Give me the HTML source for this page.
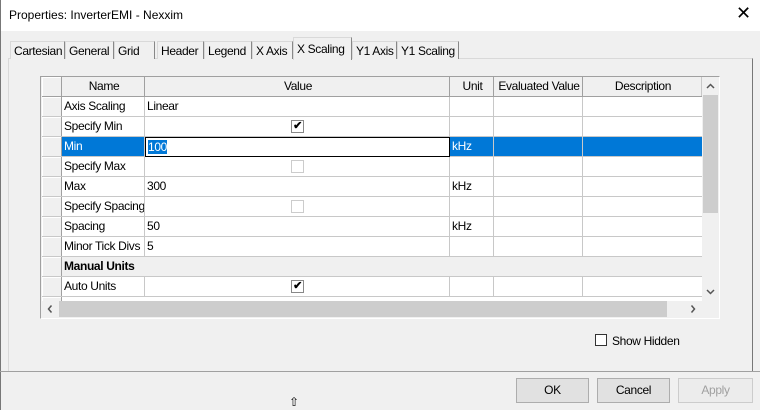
<!DOCTYPE html><html><head><style>
*{box-sizing:border-box;margin:0;padding:0}
body{width:760px;height:410px;background:#f0f0f0;font-family:"Liberation Sans",sans-serif;font-size:12px;color:#000;position:relative;overflow:hidden;letter-spacing:-0.35px}
.a{position:absolute}
.tab{position:absolute;top:41px;height:18px;border:1px solid #d9d9d9;border-bottom:none;background:#f0f0f0;padding:2px 0 0 3px;white-space:nowrap;border-right:1px solid #888;overflow:hidden}
.row{position:absolute;left:42px;width:660px;height:20px;background:#fff;border-bottom:1px solid #c8c8c8}
.c{position:absolute;top:0;height:19px;line-height:19px;padding-left:2px;border-right:1px solid #c8c8c8;white-space:nowrap;overflow:hidden}
.rh{left:0;width:20px;background:#f0f0f0;border-right:1px solid #a0a0a0;box-shadow:inset 1px 1px #fff}
.cb{position:absolute;width:13px;height:13px;border:1px solid #888;background:#fff;top:3px;left:146px;font-size:11px;line-height:11px;text-align:center;font-weight:bold}
.btn{position:absolute;top:378px;height:25px;border:1px solid #adadad;background:#e1e1e1;text-align:center;line-height:23px}
</style></head><body>
<div class="a" style="left:0;top:0;width:760px;height:31px;background:#fff"></div>
<div class="a" style="left:9px;top:8px;font-size:12px;letter-spacing:0">Properties: InverterEMI - Nexxim</div>
<div class="a" style="left:736px;top:3px;font-size:18px">✕</div>
<div class="a" style="left:0;top:0;width:1px;height:410px;background:#777"></div>
<div class="a" style="left:8px;top:58px;width:745px;height:314px;border:1px solid #d9d9d9;border-right:1px solid #777;border-bottom:none"></div>
<div class="a" style="left:0;top:371px;width:760px;height:1px;background:#a0a0a0"></div>
<div class="tab" style="left:10px;width:55px">Cartesian</div>
<div class="tab" style="left:65px;width:49px">General</div>
<div class="tab" style="left:114px;width:41px">Grid</div>
<div class="tab" style="left:157px;width:47px">Header</div>
<div class="tab" style="left:204px;width:48px">Legend</div>
<div class="tab" style="left:252px;width:41px">X Axis</div>
<div class="tab" style="left:293px;top:37px;height:23px;width:59px;background:#f0f0f0;z-index:2;padding-top:4px">X Scaling</div>
<div class="tab" style="left:352px;width:45px">Y1 Axis</div>
<div class="tab" style="left:397px;width:62px">Y1 Scaling</div>

<div class="a" style="left:40px;top:76px;width:680px;height:243px;border:1px solid #a0a0a0;border-right-color:#fff;border-bottom-color:#fff;background:#f0f0f0"></div>
<div class="row" style="top:77px;background:#f0f0f0;border-bottom:1px solid #a0a0a0">
<div class="c rh"></div>
<div class="c" style="left:20px;width:83px;text-align:center;border-right-color:#a0a0a0">Name</div>
<div class="c" style="left:103px;width:305px;text-align:center;border-right-color:#a0a0a0">Value</div>
<div class="c" style="left:408px;width:44px;text-align:center;border-right-color:#a0a0a0">Unit</div>
<div class="c" style="left:452px;width:89px;text-align:center;border-right-color:#a0a0a0">Evaluated Value</div>
<div class="c" style="left:541px;width:119px;text-align:center">Description</div>
</div>

<div class="row" style="top:97px"><div class="c rh"></div><div class="c" style="left:20px;width:83px">Axis Scaling</div><div class="c" style="left:103px;width:305px">Linear</div><div class="c" style="left:408px;width:44px"></div><div class="c" style="left:452px;width:89px"></div></div>
<div class="row" style="top:117px"><div class="c rh"></div><div class="c" style="left:20px;width:83px">Specify Min</div><div class="c" style="left:103px;width:305px"><div class="cb">✔</div></div><div class="c" style="left:408px;width:44px"></div><div class="c" style="left:452px;width:89px"></div></div>
<div class="row" style="top:137px;background:#0078d7;color:#fff"><div class="c rh" style="color:#000"></div><div class="c" style="left:20px;width:83px">Min</div><div class="c" style="left:103px;width:305px;background:#fff;color:#000;border:1px solid #000;height:20px;line-height:18px"><span style="background:#0078d7;color:#fff">100</span></div><div class="c" style="left:408px;width:44px">kHz</div><div class="c" style="left:452px;width:89px"></div></div>
<div class="row" style="top:157px"><div class="c rh"></div><div class="c" style="left:20px;width:83px">Specify Max</div><div class="c" style="left:103px;width:305px"><div class="cb" style="border-color:#ccc"></div></div><div class="c" style="left:408px;width:44px"></div><div class="c" style="left:452px;width:89px"></div></div>
<div class="row" style="top:177px"><div class="c rh"></div><div class="c" style="left:20px;width:83px">Max</div><div class="c" style="left:103px;width:305px">300</div><div class="c" style="left:408px;width:44px">kHz</div><div class="c" style="left:452px;width:89px"></div></div>
<div class="row" style="top:197px"><div class="c rh"></div><div class="c" style="left:20px;width:83px">Specify Spacing</div><div class="c" style="left:103px;width:305px"><div class="cb" style="border-color:#ccc"></div></div><div class="c" style="left:408px;width:44px"></div><div class="c" style="left:452px;width:89px"></div></div>
<div class="row" style="top:217px"><div class="c rh"></div><div class="c" style="left:20px;width:83px">Spacing</div><div class="c" style="left:103px;width:305px">50</div><div class="c" style="left:408px;width:44px">kHz</div><div class="c" style="left:452px;width:89px"></div></div>
<div class="row" style="top:237px"><div class="c rh"></div><div class="c" style="left:20px;width:83px">Minor Tick Divs</div><div class="c" style="left:103px;width:305px">5</div><div class="c" style="left:408px;width:44px"></div><div class="c" style="left:452px;width:89px"></div></div>
<div class="row" style="top:257px;background:#f0f0f0"><div class="c rh"></div><div class="c" style="left:20px;width:200px;border:none;font-weight:bold">Manual Units</div></div>
<div class="row" style="top:277px"><div class="c rh"></div><div class="c" style="left:20px;width:83px">Auto Units</div><div class="c" style="left:103px;width:305px"><div class="cb">✔</div></div><div class="c" style="left:408px;width:44px"></div><div class="c" style="left:452px;width:89px"></div></div>
<div class="row" style="top:297px;height:4px;border:none"><div class="c rh" style="height:4px"></div></div>

<div class="a" style="left:703px;top:77px;width:15px;height:224px;background:#f0f0f0"></div>
<div class="a" style="left:703px;top:95px;width:15px;height:118px;background:#cdcdcd"></div>
<svg class="a" style="left:703px;top:80px" width="15" height="12"><path d="M4 8 L7.5 4.5 L11 8" fill="none" stroke="#555" stroke-width="1.5"/></svg>
<svg class="a" style="left:703px;top:286px" width="15" height="12"><path d="M4 4 L7.5 7.5 L11 4" fill="none" stroke="#555" stroke-width="1.5"/></svg>
<div class="a" style="left:42px;top:301px;width:660px;height:16px;background:#f0f0f0"></div>
<div class="a" style="left:59px;top:301px;width:608px;height:16px;background:#cdcdcd"></div>
<svg class="a" style="left:44px;top:303px" width="12" height="12"><path d="M7.5 2.5 L4.5 6 L7.5 9.5" fill="none" stroke="#555" stroke-width="1.5"/></svg>
<svg class="a" style="left:687px;top:303px" width="12" height="12"><path d="M4.5 2.5 L7.5 6 L4.5 9.5" fill="none" stroke="#555" stroke-width="1.5"/></svg>

<div class="a" style="left:595px;top:334px;width:12px;height:12px;border:1px solid #333;background:#fff"></div>
<div class="a" style="left:612px;top:334px">Show Hidden</div>

<div class="btn" style="left:516px;width:73px">OK</div>
<div class="btn" style="left:597px;width:73px">Cancel</div>
<div class="btn" style="left:678px;width:75px;color:#a0a0a0;border-color:#ccc;background:#ececec">Apply</div>
<div class="a" style="left:289px;top:395px;font-size:12px">⇧</div>
</body></html>
